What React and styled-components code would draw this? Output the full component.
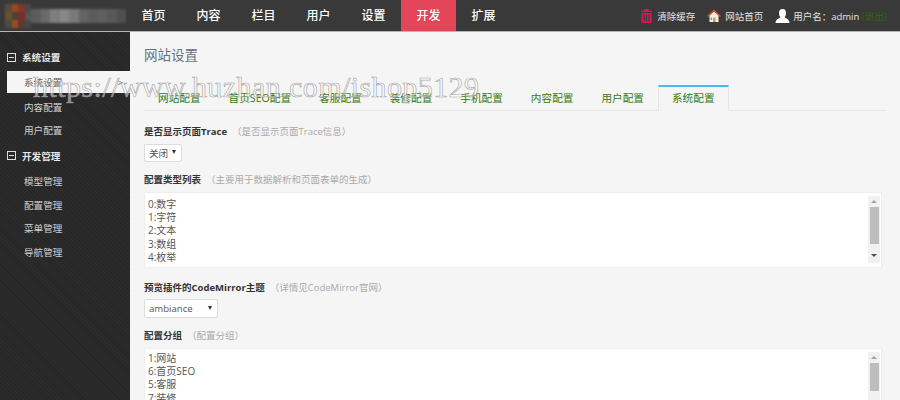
import React from 'react';
import styled, { createGlobalStyle } from 'styled-components';

const FONT = '"Open Sans", "Liberation Sans", "Noto Sans CJK SC", sans-serif';

const GlobalStyle = createGlobalStyle`
  html, body {
    margin: 0;
    height: 100%;
    overflow: hidden;
    background: #f5f5f5;
  }
  #root {
    height: 100%;
  }
`;

const navItems = ['首页', '内容', '栏目', '用户', '设置', '开发', '扩展'];
const tabs = ['网站配置', '首页SEO配置', '客服配置', '装修配置', '手机配置', '内容配置', '用户配置', '系统配置'];
const sideGroups = [
  { title: '系统设置', items: ['系统设置', '内容配置', '用户配置'] },
  { title: '开发管理', items: ['模型管理', '配置管理', '菜单管理', '导航管理'] },
];

const logoCells = [
  ['#5a4a3a', '#9a4a22', '#7a3a28', '#4a4a4a'],
  ['#6a5230', '#4a403a', '#7c2c2a', '#555'],
  ['#4c4a44', '#a04a22', '#5a3a30', '#484848'],
];
const logoBlur = ['#5c5c5c', '#6a6a6a', '#7e7e7e', '#888', '#7a7a7a', '#646464', '#5c5c5c', '#606060', '#585858', '#4e4e4e'];

const Page = styled.div`
  position: relative;
  width: 900px;
  height: 400px;
  overflow: hidden;
  display: flex;
  flex-direction: column;
  font-family: ${FONT};
`;

const Header = styled.header`
  flex: none;
  height: 31px;
  display: flex;
  background: #393939;
  border-bottom: 1px solid #b5b5b5;
`;

const Logo = styled.div`
  width: 126px;
  flex: none;
  display: flex;
  align-items: center;
  padding-left: 5px;
  box-sizing: border-box;
  filter: blur(1px);
`;

const LogoMark = styled.div`
  display: grid;
  grid-template-columns: repeat(4, 6.5px);
  grid-auto-rows: 8px;
`;

const LogoCell = styled.span`
  display: block;
  background: ${(p) => p.$color};
`;

const LogoText = styled.div`
  display: flex;
  height: 14px;
`;

const Swatch = styled.span`
  display: block;
  width: 9.5px;
  background: ${(p) => p.$color};
`;

const Nav = styled.nav`
  display: flex;
`;

const NavItem = styled.a`
  width: 55px;
  line-height: 31px;
  text-align: center;
  color: #fff;
  font-size: 12px;
  font-weight: 500;
  background: ${(p) => (p.$active ? '#e44558' : 'transparent')};
`;

const HeaderRight = styled.div`
  margin-left: auto;
  display: flex;
  align-items: center;
  gap: 12px;
  padding-right: 13px;
  color: #e4e4e4;
  font-size: 9.5px;
`;

const HeaderLink = styled.span`
  display: flex;
  align-items: center;
  gap: ${(p) => p.$gap}px;
`;

const Logout = styled.span`
  color: #2c6a0a;
`;

const Body = styled.div`
  flex: 1;
  display: flex;
  min-height: 0;
`;

const Sidebar = styled.aside`
  width: 130px;
  flex: none;
  padding-top: 15px;
  box-sizing: border-box;
  background-color: #2b2b2b;
  background-image: repeating-linear-gradient(45deg, #262626 0 1px, transparent 1px 3px);
  color: #d8d8d8;
  font-size: 9.6px;
`;

const SideGroup = styled.div`
  margin-bottom: 3.5px;
`;

const SideTitle = styled.div`
  height: 20px;
  display: flex;
  align-items: center;
  gap: 6px;
  padding-left: 7px;
  color: #e8e8e8;
  font-weight: 700;
`;

const Toggle = styled.i`
  position: relative;
  width: 7px;
  height: 7px;
  flex: none;
  border: 1px solid #ddd;
  &::after {
    content: '';
    position: absolute;
    left: 1px;
    right: 1px;
    top: 3px;
    height: 1px;
    background: #ddd;
  }
`;

const SideList = styled.ul`
  list-style: none;
  margin: 4px 0 0;
  padding: 0;
`;

const SideItem = styled.li`
  height: ${(p) => (p.$active ? '22px' : '23.5px')};
  margin: 0 0 ${(p) => (p.$active ? '2px' : '0')} 7px;
  padding: 0 7px 0 17px;
  display: flex;
  align-items: center;
  justify-content: space-between;
  color: ${(p) => (p.$active ? '#666' : '#cfcfcf')};
  background: ${(p) => (p.$active ? '#f5f5f5' : 'transparent')};
`;

const Main = styled.main`
  flex: 1;
  min-width: 0;
  padding: 12px 14px 0;
  background: #f5f5f5;
`;

const Title = styled.h1`
  margin: 0;
  height: 41px;
  font-size: 13.5px;
  line-height: 22px;
  font-weight: 400;
  color: #68707c;
`;

const TabBar = styled.div`
  height: 25px;
  display: flex;
  border-bottom: 1px solid #e6e6e6;
`;

const Tab = styled.a`
  box-sizing: border-box;
  height: 26px;
  padding: 0 13px;
  font-size: 10.65px;
  line-height: 22px;
  color: #367a0c;
  white-space: nowrap;
  border: 1px solid transparent;
  border-width: 2px 1px 0;
  ${(p) =>
    p.$active &&
    `
    border-color: #4fb9e8 #e6e6e6 #f5f5f5;
    background: #f5f5f5;
  `}
`;

const FieldLabel = styled.div`
  font-size: 9.5px;
  line-height: 14px;
  margin: ${(p) => p.$top}px 0 ${(p) => p.$bottom}px;
  color: #333;
  font-weight: 700;
`;

const Hint = styled.span`
  margin-left: 5px;
  color: #aaa;
  font-weight: 400;
`;

const Select = styled.div`
  box-sizing: border-box;
  width: ${(p) => p.$width}px;
  height: ${(p) => p.$height}px;
  display: flex;
  align-items: center;
  justify-content: space-between;
  padding: 0 5px 0 4px;
  background: #fff;
  border: 1px solid #ddd;
  border-radius: 2px;
  color: #555;
  font-size: 9.6px;
`;

const Caret = styled.i`
  width: 0;
  height: 0;
  margin-top: -2px;
  border: 2.5px solid transparent;
  border-top: 4px solid #333;
  border-bottom: 0;
`;

const TextBox = styled.div`
  box-sizing: border-box;
  width: 738px;
  height: 76px;
  flex: none;
  display: flex;
  justify-content: space-between;
  padding: 3px 1px 2px 3px;
  background: #fff;
  border: 1px solid #eee;
  overflow: hidden;
`;

const Lines = styled.div`
  padding-top: ${(p) => p.$top}px;
  font-size: 10px;
  line-height: 13.2px;
  color: #555;
`;

const ScrollTrack = styled.div`
  width: 12px;
  height: 67px;
  flex: none;
  display: flex;
  flex-direction: column;
  align-items: center;
  justify-content: space-between;
  padding: 4px 0 6px;
  box-sizing: border-box;
  background: #f1f1f1;
`;

const ScrollArrow = styled.i`
  width: 0;
  height: 0;
  border: 3px solid transparent;
  ${(p) =>
    p.$down
      ? 'border-top: 3px solid #505050; border-bottom: 0;'
      : 'border-bottom: 3px solid #a3a3a3; border-top: 0;'}
`;

const ScrollThumb = styled.div`
  width: 9px;
  height: ${(p) => p.$height}px;
  margin-top: 4px;
  margin-bottom: auto;
  background: #bdbdbd;
`;

const Watermark = styled.div`
  position: absolute;
  left: 33px;
  top: 69px;
  font-family: "Liberation Serif", serif;
  font-size: 30px;
  line-height: 36px;
  letter-spacing: 0.42px;
  white-space: nowrap;
  color: rgba(255, 255, 255, 0.5);
  -webkit-text-stroke: 0.7px rgba(150, 150, 150, 0.8);
  pointer-events: none;
`;

const TrashIcon = () => (
  <svg width="13" height="14" viewBox="0 0 12 14">
    <path fill="#e0115f" fillRule="evenodd" d="M4 0h4v1.5h3.5v1.5H.5V1.5H4zM1 4h10v10H1zm2 1.5v7h1.2v-7zm2.4 0v7h1.2v-7zm2.4 0v7H9v-7z" />
  </svg>
);

const HomeIcon = () => (
  <svg width="14" height="14" viewBox="0 0 14 14">
    <path fill="#f4f0e8" d="M2.5 6.5 7 2.5l4.5 4V13h-9z" />
    <path fill="#d9532c" d="M0 7 7 .5 14 7l-1 1-6-5.4L1 8z" />
    <path fill="#e89a2c" d="M6 8.5h2.6V13H6z" />
    <path fill="#6aa0c8" d="M3.5 8.5h1.6V11H3.5z" />
  </svg>
);

const UserIcon = () => (
  <svg width="15" height="14" viewBox="0 0 15 14">
    <ellipse cx="7.5" cy="4.2" rx="3.5" ry="4.2" fill="#fff" />
    <path fill="#fff" d="M5.5 8c-1 1.5-4.7 1.6-5 6h14c-.3-4.4-4-4.5-5-6z" />
  </svg>
);

export default function App() {
  return (
    <Page>
      <GlobalStyle />
      <Header>
        <Logo>
          <LogoMark>
            {logoCells.flat().map((color, i) => (
              <LogoCell key={i} $color={color} />
            ))}
          </LogoMark>
          <LogoText>
            {logoBlur.map((color, i) => (
              <Swatch key={i} $color={color} />
            ))}
          </LogoText>
        </Logo>
        <Nav>
          {navItems.map((item) => (
            <NavItem key={item} $active={item === '开发'}>{item}</NavItem>
          ))}
        </Nav>
        <HeaderRight>
          <HeaderLink $gap={4}><TrashIcon />清除缓存</HeaderLink>
          <HeaderLink $gap={4}><HomeIcon />网站首页</HeaderLink>
          <HeaderLink $gap={3}>
            <UserIcon />
            <span>用户名：admin <Logout>[退出]</Logout></span>
          </HeaderLink>
        </HeaderRight>
      </Header>
      <Body>
        <Sidebar>
          {sideGroups.map((group) => (
            <SideGroup key={group.title}>
              <SideTitle><Toggle />{group.title}</SideTitle>
              <SideList>
                {group.items.map((item, i) => {
                  const active = group.title === '系统设置' && i === 0;
                  return (
                    <SideItem key={item} $active={active}>
                      {item}
                      {active && <span>&gt;</span>}
                    </SideItem>
                  );
                })}
              </SideList>
            </SideGroup>
          ))}
        </Sidebar>
        <Main>
          <Title>网站设置</Title>
          <TabBar>
            {tabs.map((tab) => (
              <Tab key={tab} $active={tab === '系统配置'}>{tab}</Tab>
            ))}
          </TabBar>
          <FieldLabel $top={14} $bottom={5}>是否显示页面Trace<Hint>（是否显示页面Trace信息）</Hint></FieldLabel>
          <Select $width={38} $height={18}>关闭<Caret /></Select>
          <FieldLabel $top={11} $bottom={5}>配置类型列表<Hint>（主要用于数据解析和页面表单的生成）</Hint></FieldLabel>
          <TextBox>
            <Lines $top={2}>0:数字<br />1:字符<br />2:文本<br />3:数组<br />4:枚举</Lines>
            <ScrollTrack>
              <ScrollArrow />
              <ScrollThumb $height={37} />
              <ScrollArrow $down />
            </ScrollTrack>
          </TextBox>
          <FieldLabel $top={13} $bottom={4}>预览插件的CodeMirror主题<Hint>（详情见CodeMirror官网）</Hint></FieldLabel>
          <Select $width={74} $height={19}>ambiance<Caret /></Select>
          <FieldLabel $top={11} $bottom={5}>配置分组<Hint>（配置分组）</Hint></FieldLabel>
          <TextBox>
            <Lines $top={0}>1:网站<br />6:首页SEO<br />5:客服<br />7:装修</Lines>
            <ScrollTrack>
              <ScrollArrow />
              <ScrollThumb $height={28} />
              <ScrollArrow $down />
            </ScrollTrack>
          </TextBox>
        </Main>
      </Body>
      <Watermark>https://www.huzhan.com/ishop5129</Watermark>
    </Page>
  );
}
